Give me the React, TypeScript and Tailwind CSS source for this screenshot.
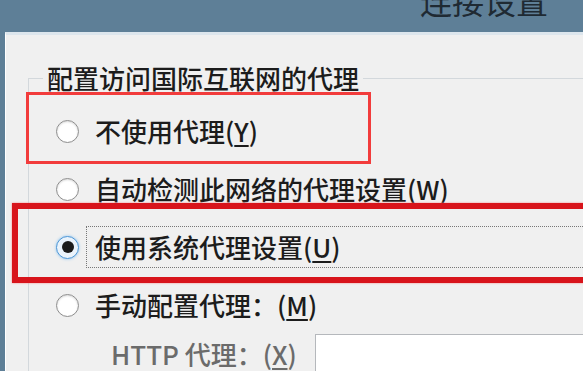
type RadioProps = { checked?: boolean }

function Radio({ checked }: RadioProps) {
    if (checked) {
        return (
            <span className="flex h-[23px] w-[23px] shrink-0 items-center justify-center rounded-full border border-[#4f97d6] bg-[#eaf3fb] shadow-[0_0_3px_#8fc4ee]">
                <span className="h-[12px] w-[12px] rounded-full bg-[#1b1b1b]" />
            </span>
        )
    }
    return <span className="h-[23px] w-[23px] shrink-0 rounded-full border border-[#8d8d8d] bg-white shadow-[inset_0_1px_2px_#d8d8d8]" />
}

type Option = { text: string; key: string; checked?: boolean }

const OPTIONS: Option[] = [
    { text: '不使用代理', key: 'Y' },
    { text: '自动检测此网络的代理设置', key: 'W' },
    { text: '使用系统代理设置', key: 'U', checked: true },
    { text: '手动配置代理：', key: 'M' },
]

function Mnemonic({ k }: { k: string }) {
    return (
        <span>
            (<span className="underline underline-offset-[3px]">{k}</span>)
        </span>
    )
}

export default function App() {
    return (
        <div className="flex h-[371px] w-[583px] flex-col overflow-hidden bg-[#5e7f97] font-['Noto_Sans_CJK_SC',sans-serif]">
            <div className="h-[32px] shrink-0 overflow-hidden pl-[420px]">
                <div className="-mt-[16px] whitespace-nowrap text-[32px] leading-[32px] text-[#1f2a33]">连接设置</div>
            </div>

            <div className="flex min-h-0 flex-1 pl-[5px]">
                <div className="relative flex-1 border-l border-t-[3px] border-l-white border-t-[#dde6ed] bg-[#f0f0f0]">
                    <fieldset className="ml-[22px] mt-[28px] border-l border-t border-[#d3d8dc]">
                        <legend className="ml-[14px] px-[4px] text-[26px] font-medium leading-[30px] text-[#1c1c1c]">配置访问国际互联网的代理</legend>

                        <div className="flex flex-col pt-[9px]">
                            {OPTIONS.map((opt) => (
                                <div key={opt.key} className="flex h-[58px] items-center gap-[7px] pl-[27px]">
                                    <Radio checked={opt.checked} />
                                    <span
                                        className={
                                            opt.checked
                                                ? 'mr-[-30px] flex h-[42px] flex-1 items-center whitespace-nowrap border border-dotted border-[#777] px-[8px] text-[26px] font-medium leading-[30px] text-[#1c1c1c]'
                                                : 'flex h-[42px] items-center whitespace-nowrap border border-transparent px-[8px] text-[26px] font-medium leading-[30px] text-[#1c1c1c]'
                                        }
                                    >
                                        {opt.text}
                                        <Mnemonic k={opt.key} />
                                    </span>
                                </div>
                            ))}

                            <div className="flex h-[40px] items-start">
                                <span className="flex h-[40px] w-[286px] shrink-0 items-center whitespace-nowrap pl-[82px] text-[26px] font-medium leading-[30px] text-[#6b6b6b]">
                                    HTTP 代理：<Mnemonic k="X" />
                                </span>
                                <div className="h-[50px] flex-1 border-l border-t border-[#b5b8bc] bg-white" />
                            </div>
                        </div>
                    </fieldset>

                    {/* annotation boxes drawn over the dialog */}
                    <div className="absolute left-[20px] top-[57px] h-[72px] w-[345px] border-[3px] border-[#f23c3c]" />
                    <div className="absolute left-[6px] top-[168px] h-[80px] w-[600px] border-[6px] border-[#d8141b] shadow-[0_0_2px_#f58a8a]" />
                </div>
            </div>
        </div>
    )
}
